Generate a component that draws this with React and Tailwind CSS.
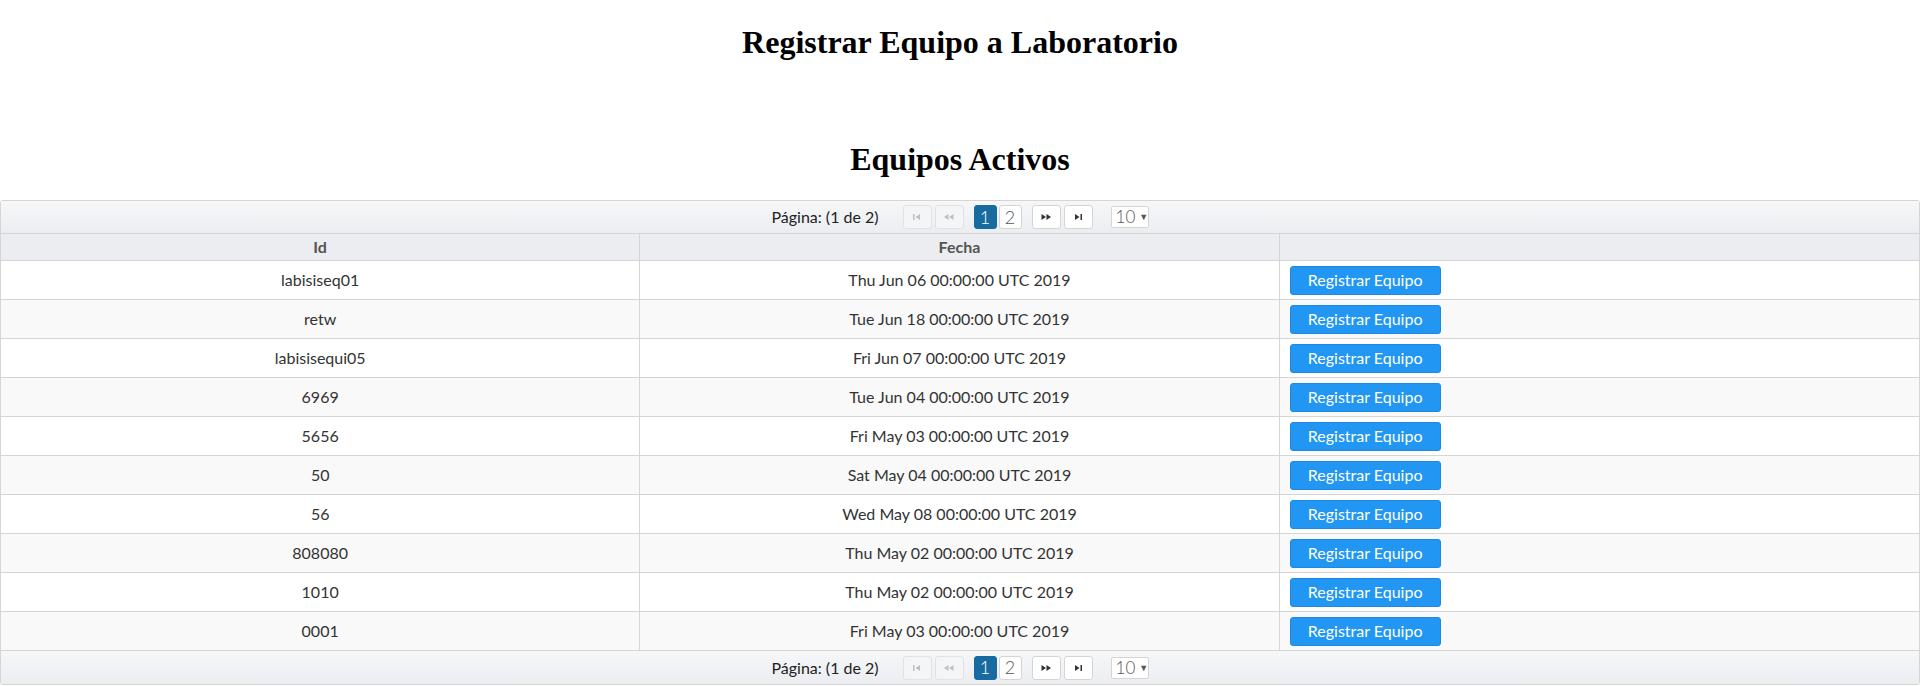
import React from "react";

const rows = [
  ["labisiseq01", "Thu Jun 06 00:00:00 UTC 2019"],
  ["retw", "Tue Jun 18 00:00:00 UTC 2019"],
  ["labisisequi05", "Fri Jun 07 00:00:00 UTC 2019"],
  ["6969", "Tue Jun 04 00:00:00 UTC 2019"],
  ["5656", "Fri May 03 00:00:00 UTC 2019"],
  ["50", "Sat May 04 00:00:00 UTC 2019"],
  ["56", "Wed May 08 00:00:00 UTC 2019"],
  ["808080", "Thu May 02 00:00:00 UTC 2019"],
  ["1010", "Thu May 02 00:00:00 UTC 2019"],
  ["0001", "Fri May 03 00:00:00 UTC 2019"],
];

function SeekFirst({ color }) {
  return (
    <svg width="8" height="6" viewBox="0 0 8 6">
      <rect x="0" y="0" width="1.5" height="6" fill={color} />
      <path d="M7 0 L2.5 3 L7 6 Z" fill={color} />
    </svg>
  );
}
function SeekPrev({ color }) {
  return (
    <svg width="10" height="6" viewBox="0 0 10 6">
      <path d="M4.5 0 L0 3 L4.5 6 Z" fill={color} />
      <path d="M9.5 0 L5 3 L9.5 6 Z" fill={color} />
    </svg>
  );
}
function SeekNext({ color }) {
  return (
    <svg width="10" height="6" viewBox="0 0 10 6">
      <path d="M0.5 0 L5 3 L0.5 6 Z" fill={color} />
      <path d="M5.5 0 L10 3 L5.5 6 Z" fill={color} />
    </svg>
  );
}
function SeekEnd({ color }) {
  return (
    <svg width="8" height="6" viewBox="0 0 8 6">
      <path d="M1 0 L5.5 3 L1 6 Z" fill={color} />
      <rect x="6.5" y="0" width="1.5" height="6" fill={color} />
    </svg>
  );
}

function Paginator({ bottom }) {
  return (
    <div
      className={
        "h-[33px] flex items-center justify-center bg-gradient-to-b from-[#f6f7f9] to-[#ebedf0] " +
        (bottom ? "" : "border-b border-[#d5d5d5]")
      }
    >
      <span className="text-[16px] text-[#222] mr-[24px]">Página: (1 de 2)</span>
      <span className="w-[29px] h-[24px] flex items-center justify-center border border-[#e2e2e2] bg-[#f4f5f7] rounded-[3px] mr-[3px]">
        <SeekFirst color="#c0c0c0" />
      </span>
      <span className="w-[29px] h-[24px] flex items-center justify-center border border-[#e2e2e2] bg-[#f4f5f7] rounded-[3px] mr-[10px]">
        <SeekPrev color="#c0c0c0" />
      </span>
      <span className="w-[23px] h-[24px] flex items-center justify-center border border-[#186ba0] bg-[#186ba0] text-white text-[18px] font-light rounded-[3px] mr-[2px]">
        1
      </span>
      <span className="w-[23px] h-[24px] flex items-center justify-center border border-[#d5d5d5] bg-white text-[#555] text-[18px] font-light rounded-[3px] mr-[10px]">
        2
      </span>
      <span className="w-[29px] h-[24px] flex items-center justify-center border border-[#d5d5d5] bg-white rounded-[3px] mr-[3px]">
        <SeekNext color="#333" />
      </span>
      <span className="w-[29px] h-[24px] flex items-center justify-center border border-[#d5d5d5] bg-white rounded-[3px] mr-[18px]">
        <SeekEnd color="#333" />
      </span>
      <span className="w-[38px] h-[22px] flex items-center border border-[#d5d5d5] bg-white rounded-[2px] pl-[4px] text-[17px] font-light text-[#555]">
        10
        <span className="ml-[4px] text-[9px] text-[#555]">▼</span>
      </span>
    </div>
  );
}

export default function App() {
  return (
    <div className="bg-white font-['Lato','Liberation_Sans',sans-serif] text-[#333]">
      <h1 className="pt-[24px] text-center font-['Liberation_Serif',serif] font-bold text-[32px] leading-[37px] text-black">
        Registrar Equipo a Laboratorio
      </h1>
      <h1 className="mt-[80px] mb-[22px] text-center font-['Liberation_Serif',serif] font-bold text-[32px] leading-[37px] text-black">
        Equipos Activos
      </h1>
      <div className="border border-[#d5d5d5] rounded-[3px] overflow-hidden">
        <Paginator />
        <div className="grid grid-cols-3 h-[27px] bg-[#ebedf0] border-b border-[#d5d5d5] text-[16px] font-bold text-[#555]">
          <div className="flex items-center justify-center border-r border-[#d5d5d5]">Id</div>
          <div className="flex items-center justify-center border-r border-[#d5d5d5]">Fecha</div>
          <div></div>
        </div>
        {rows.map(([id, fecha], i) => (
          <div
            key={i}
            className={
              "grid grid-cols-3 h-[39px] border-b border-[#d5d5d5] text-[16px] " +
              (i % 2 === 1 ? "bg-[#f9f9f9]" : "bg-white")
            }
          >
            <div className="flex items-center justify-center border-r border-[#d5d5d5]">{id}</div>
            <div className="flex items-center justify-center border-r border-[#d5d5d5]">{fecha}</div>
            <div className="flex items-center pl-[10px]">
              <span className="w-[151px] h-[29px] flex items-center justify-center bg-[#2196f3] text-white text-[16px] rounded-[3px] border border-[#1e88e5]">
                Registrar Equipo
              </span>
            </div>
          </div>
        ))}
        <Paginator bottom />
      </div>
    </div>
  );
}
